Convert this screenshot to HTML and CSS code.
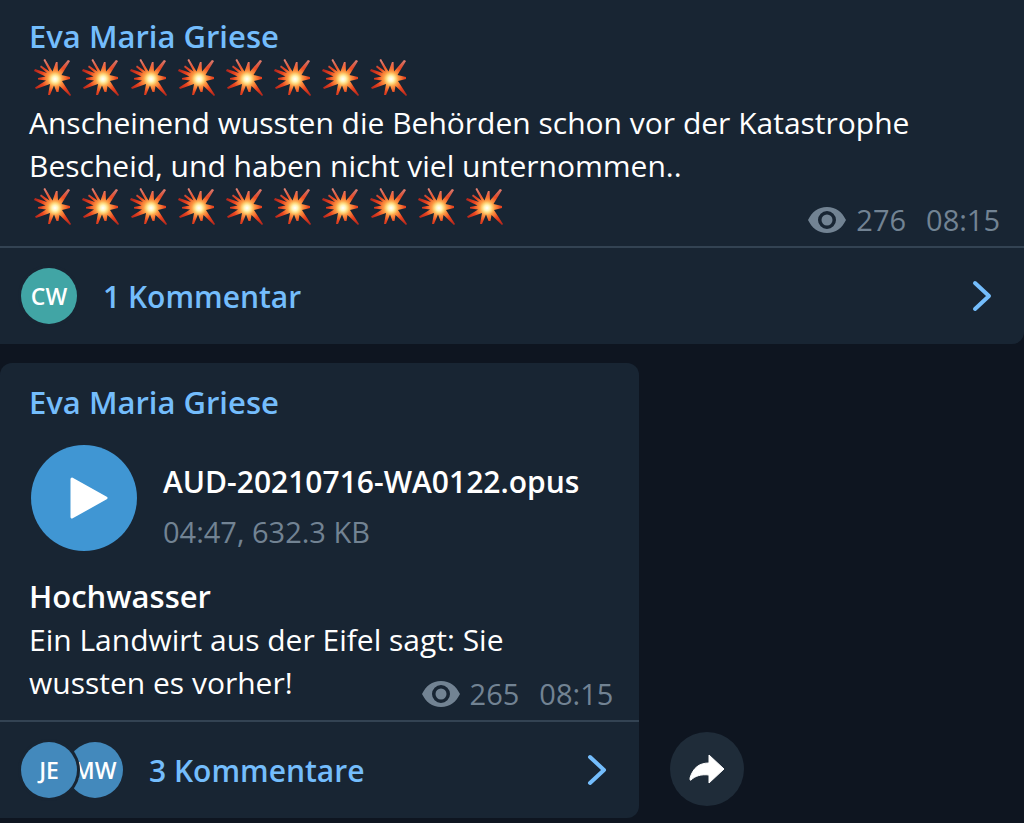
FILE: index.html
```html
<!DOCTYPE html>
<html lang="de">
<head>
    <meta charset="UTF-8">
    <meta name="viewport" content="width=device-width, initial-scale=1.0">
    <title>Eva Maria Griese</title>
    <link rel="stylesheet" href="styles.css">
</head>
<body>

    <svg class="sprite" aria-hidden="true">
        <defs>
            <radialGradient id="boom-fill" gradientUnits="userSpaceOnUse" cx="21" cy="20" r="21">
                <stop offset="0" stop-color="#fffef0"/>
                <stop offset="0.18" stop-color="#ffdf7a"/>
                <stop offset="0.38" stop-color="#fb9340"/>
                <stop offset="0.65" stop-color="#ea4520"/>
                <stop offset="1" stop-color="#b9281c"/>
            </radialGradient>
            <linearGradient id="boom-light" x1="0" y1="0" x2="0" y2="1">
                <stop offset="0" stop-color="#ffd9c8" stop-opacity="0.6"/>
                <stop offset="0.5" stop-color="#ffd9c8" stop-opacity="0"/>
            </linearGradient>
            <radialGradient id="boom-core">
                <stop offset="0" stop-color="#fff"/>
                <stop offset="0.4" stop-color="#fff6c0" stop-opacity="0.9"/>
                <stop offset="1" stop-color="#ffc860" stop-opacity="0"/>
            </radialGradient>
        </defs>
        <symbol id="boom" viewBox="0 0 38 38">
            <path fill="url(#boom-fill)" d="M11 0 L18.5 12.5 L22 3 L23.5 3 L24 12.5 L34 1 L36 2 L27.5 16 L36 18 L36 20 L28 22 L37 36 L36 37 L25.5 27 L24.5 33 L22.5 33 L20 26.5 L16 36 L14 36 L16 25 L2 30 L1 28.5 L12 21.5 L4 20.5 L4 19 L11.5 17.5 L0 12 L1 10 L13 14 L6 8 L7 6.5 L15.5 12.5 L9.5 1 Z"/>
            <path fill="url(#boom-light)" d="M11 0 L18.5 12.5 L22 3 L23.5 3 L24 12.5 L34 1 L36 2 L27.5 16 L21 20 L11.5 17.5 L0 12 L1 10 L13 14 L6 8 L7 6.5 L15.5 12.5 L9.5 1 Z"/>
            <circle cx="21" cy="20" r="7" fill="url(#boom-core)"/>
        </symbol>
        <symbol id="eye" viewBox="0 0 38 26">
            <path fill="currentColor" fill-rule="evenodd" d="M19 0 C28 0 34 5 38 13 C34 21 28 26 19 26 C10 26 4 21 0 13 C4 5 10 0 19 0 Z M19 4 a9 9 0 1 0 0 18 a9 9 0 1 0 0 -18 Z"/>
            <circle cx="19" cy="13" r="5.5" fill="currentColor"/>
        </symbol>
        <symbol id="chevron" viewBox="0 0 20 32">
            <path fill="none" stroke="currentColor" stroke-width="4" stroke-linecap="round" stroke-linejoin="round" d="M3 3 L17 16 L3 29"/>
        </symbol>
    </svg>

    <main class="chat">
        <article class="message message-wide">
            <div class="content">
                <h2 class="author">Eva Maria Griese</h2>
                <div class="emoji-line" role="img" aria-label="Explosion">
                    <svg class="boom"><use href="#boom"/></svg><svg class="boom"><use href="#boom"/></svg><svg class="boom"><use href="#boom"/></svg><svg class="boom"><use href="#boom"/></svg><svg class="boom"><use href="#boom"/></svg><svg class="boom"><use href="#boom"/></svg><svg class="boom"><use href="#boom"/></svg><svg class="boom"><use href="#boom"/></svg>
                </div>
                <p>Anscheinend wussten die Behörden schon vor der Katastrophe<br>Bescheid, und haben nicht viel unternommen..</p>
                <div class="last-line">
                    <div class="emoji-line" role="img" aria-label="Explosion">
                        <svg class="boom"><use href="#boom"/></svg><svg class="boom"><use href="#boom"/></svg><svg class="boom"><use href="#boom"/></svg><svg class="boom"><use href="#boom"/></svg><svg class="boom"><use href="#boom"/></svg><svg class="boom"><use href="#boom"/></svg><svg class="boom"><use href="#boom"/></svg><svg class="boom"><use href="#boom"/></svg><svg class="boom"><use href="#boom"/></svg><svg class="boom"><use href="#boom"/></svg>
                    </div>
                    <div class="meta">
                        <svg class="eye"><use href="#eye"/></svg>
                        <span class="views">276</span>
                        <time>08:15</time>
                    </div>
                </div>
            </div>
            <a class="comments" href="#">
                <span class="avatars"><span class="avatar teal">CW</span></span>
                <span class="comments-label">1 Kommentar</span>
                <svg class="chevron"><use href="#chevron"/></svg>
            </a>
        </article>

        <div class="row">
            <article class="message">
                <div class="content">
                    <h2 class="author">Eva Maria Griese</h2>
                    <div class="audio">
                        <button class="play" type="button" aria-label="Abspielen">
                            <svg viewBox="0 0 38 42"><path d="M2 2 L36 21 L2 40 Z" fill="#fff" stroke="#fff" stroke-width="3" stroke-linejoin="round"/></svg>
                        </button>
                        <div class="audio-info">
                            <div class="file-name">AUD-20210716-WA0122.opus</div>
                            <div class="file-size">04:47, 632.3 KB</div>
                        </div>
                    </div>
                    <p><strong>Hochwasser</strong><br>Ein Landwirt aus der Eifel sagt: Sie</p>
                    <div class="last-line">
                        <p>wussten es vorher!</p>
                        <div class="meta">
                            <svg class="eye"><use href="#eye"/></svg>
                            <span class="views">265</span>
                            <time>08:15</time>
                        </div>
                    </div>
                </div>
                <a class="comments" href="#">
                    <span class="avatars"><span class="avatar blue">JE</span><span class="avatar blue">MW</span></span>
                    <span class="comments-label">3 Kommentare</span>
                    <svg class="chevron"><use href="#chevron"/></svg>
                </a>
            </article>
            <button class="share" type="button" aria-label="Weiterleiten">
                <svg viewBox="0 0 36 32"><path fill="#fff" stroke="#fff" stroke-linejoin="round" d="M20 2 L35 16 L20 30 V22 C12 21 6 23 2 27 C1 28 1 26 1 25 C4 15 10 10 20 10 Z"/></svg>
            </button>
        </div>
    </main>

</body>
</html>
```
FILE: styles.css
```css
:root {
    --bg: #0e1520;
    --bubble: #182533;
    --line: #334353;
    --link: #74bdfc;
    --text: #fff;
    --muted: #728393;
}

* { box-sizing: border-box; }

body {
    margin: 0;
    background: var(--bg);
    color: var(--text);
    font-family: "Open Sans", "Noto Sans", sans-serif;
    font-size: 30px;
    line-height: 43px;
}

svg { display: block; flex: none; }

p, h2 { margin: 0; }

strong {
    font-size: 31px;
    font-weight: 600;
}

.sprite {
    position: absolute;
    width: 0;
    height: 0;
}

.chat {
    display: flex;
    flex-direction: column;
    gap: 19px;
}

.row {
    display: flex;
    align-items: flex-end;
    gap: 31px;
}

/* message bubble */
.message {
    background: var(--bubble);
    border-radius: 12px;
}

.message-wide { border-radius: 0 0 12px 0; }

.row .message { border-radius: 12px 12px 12px 0; }

.content { padding: 18px 26px 11px 29px; }

.message-wide .content {
    padding-top: 15px;
    padding-right: 24px;
}

.author {
    color: var(--link);
    font-size: 31px;
    font-weight: 600;
}

.emoji-line {
    display: flex;
    align-items: flex-start;
    gap: 10px;
    height: 43px;
    padding: 1px 0 0 5px;
}

.boom {
    width: 38px;
    height: 38px;
}

.last-line {
    display: flex;
    justify-content: space-between;
    height: 48px;
}

.meta {
    display: flex;
    align-items: center;
    align-self: flex-end;
    color: var(--muted);
    font-size: 29px;
    line-height: 30px;
}

.eye {
    width: 38px;
    height: 26px;
    margin-right: 10px;
}

.views { margin-right: 20px; }

/* audio file */
.audio {
    display: flex;
    align-items: center;
    gap: 26px;
    padding: 15px 34px 18px 2px;
}

.play {
    display: flex;
    align-items: center;
    justify-content: center;
    width: 106px;
    height: 106px;
    padding: 0 0 0 10px;
    border: none;
    border-radius: 50%;
    background: #4096d3;
    cursor: pointer;
}

.play svg {
    width: 38px;
    height: 42px;
}

.audio-info {
    padding-top: 18px;
    line-height: 50px;
    white-space: nowrap;
}

.file-name { font-weight: 600; }

.file-size {
    color: var(--muted);
    font-size: 29px;
}

/* comments bar */
.comments {
    display: flex;
    align-items: center;
    height: 98px;
    padding: 0 32px 0 21px;
    border-top: 2px solid var(--line);
    color: var(--link);
    font-weight: 600;
    text-decoration: none;
}

.comments-label {
    flex: 1;
    margin-left: 26px;
}

.avatars { display: flex; }

.avatar {
    width: 56px;
    height: 56px;
    border-radius: 50%;
    color: #fff;
    font-size: 23px;
    line-height: 56px;
    text-align: center;
}

.avatar + .avatar { margin-left: -10px; }

.avatar:first-child {
    z-index: 1;
    box-shadow: 0 0 0 3px var(--bubble);
}

.teal { background: #41a5a5; }
.blue { background: #4389bc; }

.chevron {
    width: 20px;
    height: 32px;
}

/* forward button */
.share {
    display: flex;
    align-items: center;
    justify-content: center;
    width: 74px;
    height: 74px;
    margin-bottom: 12px;
    padding: 0;
    border: none;
    border-radius: 50%;
    background: #1f2c39;
    cursor: pointer;
}

.share svg {
    width: 36px;
    height: 32px;
}
```
